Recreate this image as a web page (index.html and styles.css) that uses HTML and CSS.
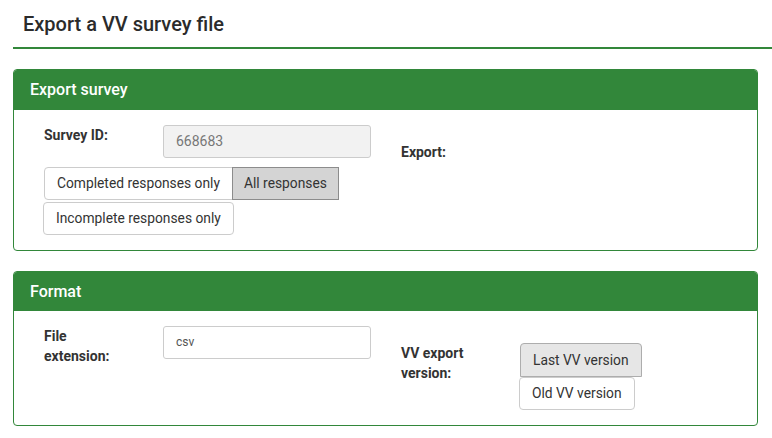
FILE: index.html
```html
<!DOCTYPE html>
<html>
<head>
<meta charset="utf-8">
<link rel="stylesheet" href="styles.css">
</head>
<body>
<div class="page">
  <div class="page-title">Export a VV survey file</div>

  <div class="panel">
    <div class="panel-heading">Export survey</div>
    <div class="panel-body">
      <div class="col">
        <div class="row">
          <div class="label">Survey ID:</div>
          <div class="input disabled">668683</div>
        </div>
        <div class="btn-group wide">
          <span class="btn first">Completed responses only</span>
          <span class="btn active">All responses</span>
          <span class="btn lone gap">Incomplete responses only</span>
        </div>
      </div>
      <div class="col">
        <div class="row offset">
          <div class="label">Export:</div>
          <div></div>
        </div>
      </div>
    </div>
  </div>

  <div class="panel second">
    <div class="panel-heading">Format</div>
    <div class="panel-body">
      <div class="col">
        <div class="row">
          <div class="label">File extension:</div>
          <div class="input small">csv</div>
        </div>
      </div>
      <div class="col">
        <div class="row offset">
          <div class="label">VV export version:</div>
          <div class="btn-group">
            <span class="btn selected">Last VV version</span>
            <span class="btn lone">Old VV version</span>
          </div>
        </div>
      </div>
    </div>
  </div>
</div>
</body>
</html>
```

FILE: styles.css
```css
* { box-sizing: border-box; }

body {
  margin: 0;
  font-family: Roboto, "Liberation Sans", sans-serif;
  font-size: 14px;
  color: #333;
  background: #fff;
}

.page {
  padding-left: 13px;
}

.page-title {
  font-size: 20px;
  line-height: 24px;
  font-weight: 500;
  color: #2b2b2b;
  padding: 12px 10px 11px;
  border-bottom: 2px solid #32873a;
}

.panel {
  margin: 20px 14px 20px 0;
  border: 1px solid #32873a;
  border-radius: 4px;
  overflow: hidden;
}

.panel-heading {
  background: #32873a;
  color: #fff;
  font-size: 16px;
  font-weight: 500;
  height: 40px;
  line-height: 40px;
  padding: 0 16px;
}

.panel.second .panel-heading {
  height: 39px;
  line-height: 39px;
}

.panel-body {
  display: flex;
  gap: 30px;
  padding: 15px 30px 15px 30px;
}

.col {
  width: 327px;
  display: flex;
  flex-direction: column;
}

.row {
  display: grid;
  grid-template-columns: 119px 208px;
  align-items: start;
}

.row.offset {
  margin-top: 17px;
}

.label {
  font-weight: 700;
  line-height: 20px;
  padding-right: 30px;
  color: #333;
}

.input {
  height: 33px;
  border: 1px solid #ccc;
  border-radius: 3px;
  padding: 0 12px;
  line-height: 31px;
  color: #666;
  background: #fff;
}

.input.disabled {
  background: #f2f2f2;
  color: #777;
  font-size: 14px;
}

.input.small {
  font-size: 12px;
  color: #555;
}

.btn-group {
  display: flex;
  flex-wrap: wrap;
  align-items: flex-start;
}

.btn-group.wide {
  margin-top: 9px;
}

.btn {
  display: inline-block;
  border: 1px solid #ccc;
  background: #fff;
  color: #333;
  padding: 6px 12px;
  line-height: 19px;
  font-size: 13.8px;
  white-space: nowrap;
}

.btn.first {
  border-radius: 4px 0 0 4px;
  padding: 6px 12px;
}

.btn.active {
  background: #d4d4d4;
  border-color: #8c8c8c;
  margin-left: -1px;
  padding: 6px 11px;
}

.btn.lone {
  border-radius: 4px;
  margin-left: -1px;
}

.btn.lone.gap {
  margin-top: 2px;
}

.btn.selected {
  background: #e6e6e6;
  border-color: #adadad;
  border-radius: 4px 4px 0 0;
  line-height: 20px;
}
```
